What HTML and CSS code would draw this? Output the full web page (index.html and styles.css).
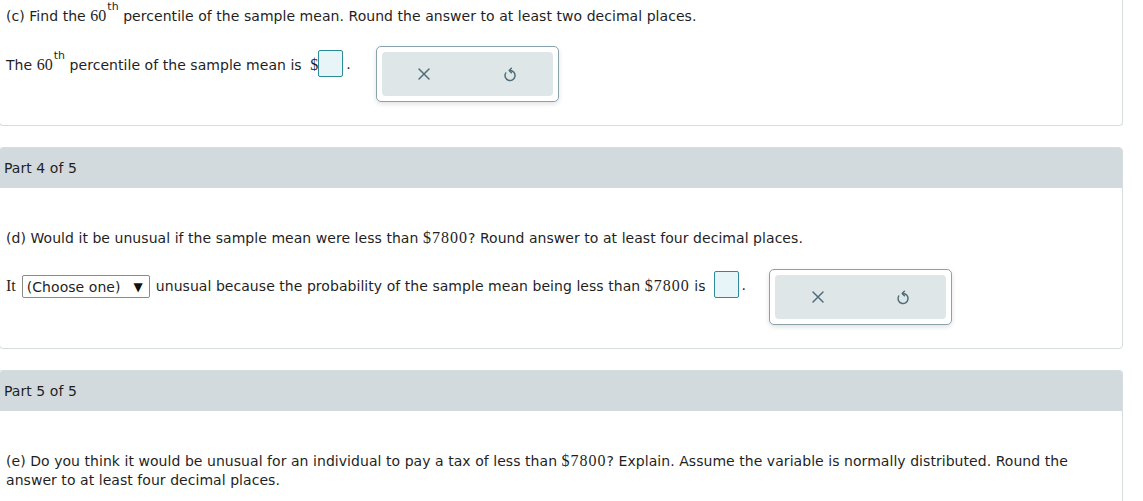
FILE: index.html
```html
<!DOCTYPE html>
<html>
<head>
<meta charset="utf-8">
<link rel="stylesheet" href="styles.css">
</head>
<body>
<div class="card card-first">
  <div class="body body-first">
    <p class="q">(c) Find the <span class="m">60</span><sup>th</sup> percentile of the sample mean. Round the answer to at least two decimal places.</p>
    <div class="row">
      <div class="ans"><span class="txt">The <span class="m">60</span><sup>th</sup> percentile of the sample mean is <span class="m dollar">$</span></span><span class="box"></span><span class="dot">.</span></div>
      <div class="tools tools-first">
        <div class="tools-in">
          <span class="tbtn"><svg width="14" height="14" viewBox="0 0 14 14"><path d="M2 2 L12 12 M12 2 L2 12" stroke="#4e6e79" stroke-width="1.5" fill="none" stroke-linecap="round"/></svg></span>
          <span class="tbtn"><svg width="16" height="16" viewBox="0 0 16 16"><path d="M3.7 7 A5 5 0 1 0 8 4.5" stroke="#4e6e79" stroke-width="1.5" fill="none" stroke-linecap="round"/><path d="M9.4 2.3 L7.2 4.5 L9.4 6.7" stroke="#4e6e79" stroke-width="1.5" fill="none" stroke-linecap="round" stroke-linejoin="round"/></svg></span>
        </div>
      </div>
    </div>
  </div>
</div>

<div class="card">
  <div class="head">Part 4 of 5</div>
  <div class="body">
    <p class="q">(d) Would it be unusual if the sample mean were less than <span class="m money">$7800</span>? Round answer to at least four decimal places.</p>
    <div class="row row2">
      <div class="ans ans2"><span class="txt"><span class="m">It</span></span><span class="sel"><span>(Choose one)</span><span class="arr">&#9660;</span></span><span class="txt">unusual because the probability of the sample mean being less than <span class="m money">$7800</span> is</span><span class="box box-gap"></span><span class="dot">.</span></div>
      <div class="tools">
        <div class="tools-in">
          <span class="tbtn"><svg width="14" height="14" viewBox="0 0 14 14"><path d="M2 2 L12 12 M12 2 L2 12" stroke="#4e6e79" stroke-width="1.5" fill="none" stroke-linecap="round"/></svg></span>
          <span class="tbtn"><svg width="16" height="16" viewBox="0 0 16 16"><path d="M3.7 7 A5 5 0 1 0 8 4.5" stroke="#4e6e79" stroke-width="1.5" fill="none" stroke-linecap="round"/><path d="M9.4 2.3 L7.2 4.5 L9.4 6.7" stroke="#4e6e79" stroke-width="1.5" fill="none" stroke-linecap="round" stroke-linejoin="round"/></svg></span>
        </div>
      </div>
    </div>
  </div>
</div>

<div class="card card-last">
  <div class="head">Part 5 of 5</div>
  <div class="body">
    <p class="q">(e) Do you think it would be unusual for an individual to pay a tax of less than <span class="m money">$7800</span>? Explain. Assume the variable is normally distributed. Round the answer to at least four decimal places.</p>
  </div>
</div>
</body>
</html>
```

FILE: styles.css
```css
html, body {
  margin: 0;
  padding: 0;
  background: #ffffff;
}
body {
  font-family: Verdana, "DejaVu Sans", sans-serif;
  font-size: 14px;
  letter-spacing: 0.05px;
  color: #1f1f1f;
  overflow: hidden;
}
.card {
  width: 1122px;
  margin-left: -1px;
  border: 1px solid #d5dddd;
  border-radius: 4px;
  background: #fff;
  margin-bottom: 21px;
  overflow: hidden;
}
.card-first {
  border-top: none;
  border-radius: 0 0 4px 4px;
}
.card-last {
  border-bottom: none;
}
.head {
  background: #d2dadd;
  height: 40px;
  line-height: 40px;
  padding-left: 4px;
}
.body {
  padding: 40px 0 23px 6px;
}
.body-first {
  padding-top: 6px;
}
.q {
  margin: 0;
  line-height: 19px;
  width: 1105px;
}
.m {
  font-family: "Liberation Serif", "Times New Roman", serif;
  font-size: 16px;
  letter-spacing: 0;
}
.money {
  letter-spacing: 1px;
}
.dollar {
  margin-left: 4px;
}
sup {
  font-size: 11px;
  line-height: 0;
  vertical-align: 0;
  position: relative;
  top: -11px;
  margin-left: 1px;
}
.row {
  display: flex;
  align-items: flex-start;
  margin-top: 20px;
}
.row2 {
  margin-top: 21px;
}
.ans {
  display: flex;
  align-items: center;
  height: 27px;
  margin-top: 4px;
  white-space: pre;
}
.ans2 {
  margin-top: 2px;
}
.txt {
  line-height: 19px;
  position: relative;
  top: 1px;
}
.box {
  display: inline-block;
  width: 23px;
  height: 25px;
  border: 1px solid #2d8a98;
  border-radius: 2px;
  background: #e7f5f8;
}
.box-gap {
  margin-left: 8px;
}
.dot {
  margin-left: 3px;
}
.sel {
  display: inline-flex;
  align-items: center;
  justify-content: space-between;
  box-sizing: border-box;
  width: 128px;
  height: 23px;
  border: 1px solid #8a8a8a;
  border-radius: 2px;
  padding: 0 6px 0 4px;
  margin: 0 6px 0 6px;
  position: relative;
  top: 2px;
}
.arr {
  font-size: 12px;
  color: #111;
}
.tools {
  margin-left: 23px;
  width: 171px;
  height: 44px;
  padding: 5px;
  border: 1px solid #8aa2ab;
  border-radius: 5px;
  box-shadow: 0 2px 5px rgba(0, 0, 0, 0.12);
  background: #fff;
}
.tools-first {
  margin-left: 25px;
}
.tools-in {
  display: flex;
  height: 44px;
  background: #dfe6e8;
  border-radius: 4px;
}
.tbtn {
  flex: 1;
  display: flex;
  align-items: center;
  justify-content: center;
}
```
